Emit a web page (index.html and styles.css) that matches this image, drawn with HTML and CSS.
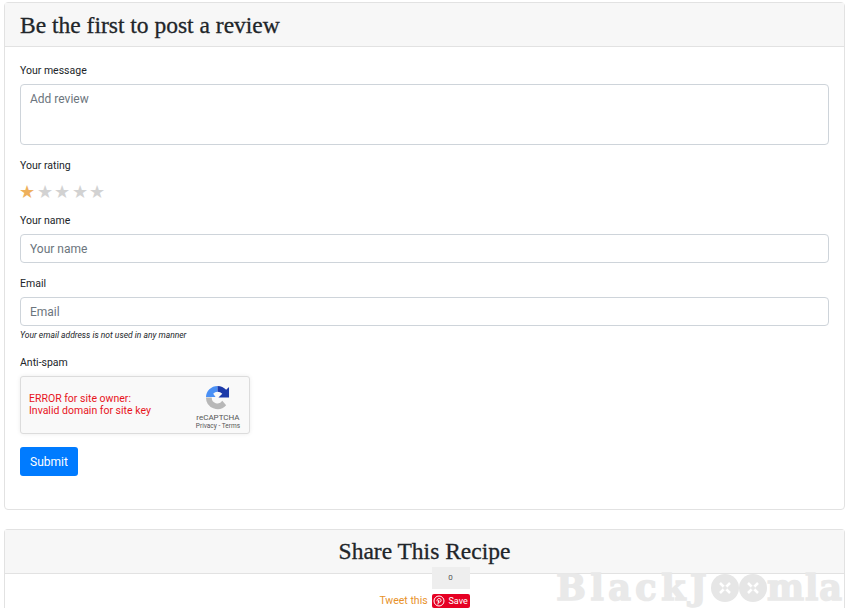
FILE: index.html
```html
<!DOCTYPE html>
<html>
<head>
    <title>Review</title>
    <link rel="stylesheet" href="styles.css">
</head>
<body>
    <div class="card review-card">
        <h3 class="card-header">Be the first to post a review</h3>
        <form class="card-body">
            <div class="form-group">
                <label>Your message</label>
                <div class="form-control textarea">Add review</div>
            </div>
            <div class="form-group rating-group">
                <label>Your rating</label>
                <div class="stars">
                    <span class="star on">★</span><span class="star">★</span><span class="star">★</span><span class="star">★</span><span class="star">★</span>
                </div>
            </div>
            <div class="form-group">
                <label>Your name</label>
                <div class="form-control">Your name</div>
            </div>
            <div class="form-group email-group">
                <label>Email</label>
                <div class="form-control">Email</div>
                <small class="hint">Your email address is not used in any manner</small>
            </div>
            <div class="form-group captcha-group">
                <label>Anti-spam</label>
                <div class="recaptcha">
                    <div class="recaptcha-error">ERROR for site owner:<br>Invalid domain for site key</div>
                    <div class="recaptcha-logo">
                        <svg width="25" height="25" viewBox="0 0 26 26">
                            <path d="M1 13A12 12 0 0 1 13 1V7A6 6 0 0 0 8.500 9L11 12.500H1Z" fill="#4a90f5"/>
                            <path d="M13 1A12 12 0 0 1 22 5L25 2V13H14L18 9A7 7 0 0 0 13 7Z" fill="#1c3aa9"/>
                            <path d="M1 13H7A6 6 0 0 0 18 16.500L22 21A12 12 0 0 1 1 13Z" fill="#b8b8b8"/>
                        </svg>
                        <div class="recaptcha-name">reCAPTCHA</div>
                        <div class="recaptcha-links">Privacy - Terms</div>
                    </div>
                </div>
            </div>
            <button type="button" class="btn-submit">Submit</button>
        </form>
    </div>

    <div class="card share-card">
        <h3 class="card-header centered">Share This Recipe</h3>
        <div class="share-body">
            <a class="tweet">Tweet this</a>
            <div class="pin">
                <div class="pin-count">0</div>
                <div class="pin-save">
                    <svg width="12" height="12" viewBox="0 0 12 12">
                        <circle cx="6" cy="6" r="5" fill="none" stroke="#fff" stroke-width="1"/>
                        <path d="M4.800 9.500l1.100-4.500M4.200 6.400c-.6-1.500.5-2.900 2-2.900s2.200 1.200 1.800 2.500-1.700 1.500-2.200.8" fill="none" stroke="#fff" stroke-width="1"/>
                    </svg>
                    Save
                </div>
            </div>
        </div>
    </div>

    <div class="watermark">
        <span class="wm-left">BlackJ</span>
        <svg class="joomla-o" width="28" height="28" viewBox="0 0 28 28"><circle cx="14" cy="14" r="14" fill="#e6e6e6"/><path d="M9 9l10 10M19 9l-10 10" stroke="#fff" stroke-width="2.500"/><circle cx="14" cy="14" r="2" fill="#e6e6e6"/></svg>
        <svg class="joomla-o" width="28" height="28" viewBox="0 0 28 28"><circle cx="14" cy="14" r="14" fill="#e6e6e6"/><path d="M9 9l10 10M19 9l-10 10" stroke="#fff" stroke-width="2.500"/><circle cx="14" cy="14" r="2" fill="#e6e6e6"/></svg>
        <span class="wm-right">mla</span>
    </div>
</body>
</html>
```

FILE: styles.css
```css
html, body {
    height: 608px;
    overflow: hidden;
}
body {
    position: relative;
    box-sizing: border-box;
    margin: 0;
    padding: 2px 5px 0 4px;
    font-family: Roboto, "Liberation Sans", sans-serif;
    font-size: 10.500px;
    line-height: 18px;
    color: #212529;
    background-color: #fff;
}
.card {
    border: 1px solid #e2e2e2;
    border-radius: 4px;
    background-color: #fff;
}
.review-card {
    height: 508px;
    box-sizing: border-box;
    margin-bottom: 19px;
}
.card-header {
    height: 44px;
    box-sizing: border-box;
    margin: 0;
    padding: 0 15px;
    font-family: "Liberation Serif", serif;
    font-size: 23.500px;
    font-weight: 400;
    line-height: 44px;
    color: #212529;
    background-color: #f7f7f7;
    border-bottom: 1px solid #e2e2e2;
    -webkit-text-stroke: 0.3px #212529;
}
.card-header.centered {
    line-height: 42px;
    text-align: center;
}
.card-body {
    padding: 14px 15px 0;
}
.form-group {
    margin-bottom: 11px;
}
.form-group label {
    display: block;
    margin-bottom: 4px;
    padding-top: 1px;
}
.form-control {
    height: 29px;
    box-sizing: border-box;
    padding: 0 9px;
    border: 1px solid #ced4da;
    border-radius: 4px;
    font-size: 12px;
    line-height: 29px;
    color: #6c757d;
}
.form-control.textarea {
    height: 61px;
    line-height: 27px;
    padding-top: 1px;
}
.rating-group {
    margin-bottom: 6px;
}
.email-group {
    margin-bottom: 9px;
}
.captcha-group {
    margin-bottom: 13px;
}
.stars {
    display: flex;
    height: 26px;
    align-items: center;
    margin-left: -1px;
}
.star {
    width: 17.500px;
    font-size: 18px;
    line-height: 26px;
    color: #d2d2d2;
}
.star.on {
    color: #eeb05c;
}
.hint {
    display: block;
    font-size: 8.500px;
    font-style: italic;
    line-height: 18px;
}
.recaptcha {
    display: flex;
    width: 230px;
    height: 58px;
    box-sizing: border-box;
    justify-content: space-between;
    align-items: center;
    padding: 0 9px 0 8px;
    border: 1px solid #dcdcdc;
    border-radius: 3px;
    background-color: #f9f9f9;
    box-shadow: 0 0 4px rgba(0,0,0,0.08);
}
.recaptcha-error {
    font-size: 10.500px;
    line-height: 12px;
    color: #e8141c;
}
.recaptcha-logo {
    padding-top: 5px;
    text-align: center;
    color: #555;
}
.recaptcha-logo svg {
    display: block;
    margin: 0 auto 3px;
}
.recaptcha-name {
    font-size: 8px;
    line-height: 9px;
}
.recaptcha-links {
    font-size: 6.500px;
    line-height: 9px;
}
.btn-submit {
    display: block;
    width: 58px;
    height: 29px;
    padding: 0;
    border: none;
    border-radius: 3px;
    font-family: inherit;
    font-size: 12px;
    color: #fff;
    background-color: #007bff;
}
.share-card {
    height: 79px;
    box-sizing: border-box;
    border-bottom: none;
    border-radius: 4px 4px 0 0;
}
.share-body {
    display: flex;
    justify-content: center;
    align-items: flex-end;
    gap: 4px;
    margin-top: -7px;
}
.tweet {
    color: #e8922a;
    line-height: 14px;
}
.pin {
    width: 38px;
}
.pin-count {
    height: 22px;
    margin-bottom: 5px;
    font-size: 8px;
    line-height: 22px;
    text-align: center;
    color: #555;
    background-color: #eee;
}
.pin-save {
    display: flex;
    height: 14px;
    align-items: center;
    justify-content: center;
    gap: 3px;
    border-radius: 2px;
    font-size: 9px;
    color: #fff;
    background-color: #e60023;
}
.watermark {
    position: absolute;
    right: 7px;
    top: 569px;
    display: flex;
    align-items: center;
    font-family: "DejaVu Serif", serif;
    font-size: 35px;
    font-weight: 700;
    line-height: 38px;
    color: #e9e9e9;
    -webkit-text-stroke: 1.5px #e9e9e9;
}
.wm-left {
    letter-spacing: 4.500px;
}
.wm-right {
    letter-spacing: 1px;
}
```
